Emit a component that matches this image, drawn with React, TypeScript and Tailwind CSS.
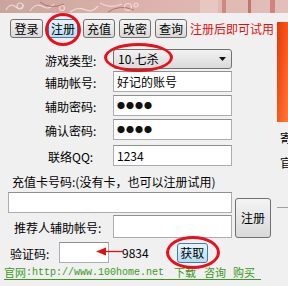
const btn =
  "h-[19px] rounded-[3px] border border-[#707070] bg-linear-to-b from-[#f4f4f4] to-[#d9d9d9] text-[12px] leading-none text-black flex items-center justify-center";
const btnHot =
  "h-[19px] rounded-[3px] border border-[#3c7fb1] bg-linear-to-b from-[#e6f5fd] to-[#b4def7] text-[12px] leading-none text-black flex items-center justify-center";
const box =
  "h-[21px] border border-[#abadb3] border-t-[#8e8f8f] bg-white px-[3px] text-[12px] leading-none text-black flex items-center outline-none";

const Field = ({
  label,
  value,
  labelClass,
  rowClass,
  dots,
}: {
  label: string;
  value: string;
  labelClass: string;
  rowClass: string;
  dots?: boolean;
}) => (
  <div className={"flex items-center " + rowClass}>
    <div className={"w-[113px] text-[12px] leading-[14px] pt-[2px] " + labelClass}>{label}</div>
    <div className={box + " w-[119px]"}>
      {dots ? (
        <span className="text-[8px] tracking-[1px] text-[#111]">●●●●</span>
      ) : (
        <span>{value}</span>
      )}
    </div>
  </div>
);

export default function App() {
  return (
    <div className="relative w-[288px] h-[286px] overflow-hidden bg-[#f0f0f0] font-['Noto_Sans_CJK_SC','Noto_Sans',sans-serif] text-black">
      {/* top banner strip */}
      <div className="h-[13px] w-full bg-linear-to-r from-[#c9a59d] via-[#dcb3ab] to-[#e2bfb9] relative overflow-hidden">
        <svg width="288" height="13" className="absolute left-0 top-0">
          <g fill="none" stroke="#f3e6df" strokeWidth="1.2" opacity="0.8">
            <path d="M6 10 q4 -8 10 -3 q4 4 8 -2" />
            <path d="M30 11 q6 -9 14 -4 q5 3 10 -3" />
            <circle cx="20" cy="6" r="3" />
            <circle cx="62" cy="8" r="2.5" />
            <path d="M70 12 q8 -6 16 -2 q6 3 12 -4" />
            <circle cx="128" cy="7" r="3.5" />
            <circle cx="136" cy="5" r="2" />
            <path d="M100 3 q10 6 22 1" />
          </g>
          <g stroke="#a14a42" strokeWidth="1" opacity="0.6" fill="none">
            <path d="M40 2 q10 8 24 2" />
            <path d="M108 12 q12 -8 26 -2" />
          </g>
          <rect x="222" y="0" width="4" height="13" fill="#c8746b" opacity="0.7" />
          <rect x="248" y="0" width="3" height="13" fill="#b85750" opacity="0.7" />
          <rect x="270" y="0" width="5" height="13" fill="#cc6a60" opacity="0.7" />
          <rect x="200" y="0" width="18" height="13" fill="#edd7d2" opacity="0.5" />
        </svg>
      </div>

      <div className="flex">
        {/* main column */}
        <div className="w-[277px]">
          <div className="mt-[6px] flex items-center pl-[10px]">
            <button className={btn + " w-[33px]"}>登录</button>
            <button className={btnHot + " w-[30px] ml-[5px]"}>注册</button>
            <button className={btn + " w-[32px] ml-[5px]"}>充值</button>
            <button className={btn + " w-[32px] ml-[4px]"}>改密</button>
            <button className={btn + " w-[32px] ml-[4px]"}>查询</button>
            <span className="ml-[3px] text-[12px] leading-[14px] text-[#dd1010] whitespace-nowrap">
              注册后即可试用
            </span>
          </div>

          <div className="mt-[11px] flex items-center">
            <div className="w-[113px] pl-[45px] text-[12px] leading-[14px] pt-[4px]">游戏类型:</div>
            <div className="w-[119px] h-[20px] rounded-[3px] border border-[#707070] bg-linear-to-b from-[#f2f2f2] to-[#dadada] flex items-center pl-[4px] pr-[5px] text-[12px] leading-none">
              <span className="flex-1">10.七杀</span>
              <svg width="7" height="4" viewBox="0 0 7 4">
                <path d="M0 0 H7 L3.5 4 Z" fill="#111" />
              </svg>
            </div>
          </div>
          <Field label="辅助帐号:" value="好记的账号" labelClass="pl-[45px]" rowClass="mt-[2px]" />
          <Field label="辅助密码:" value="" labelClass="pl-[45px]" rowClass="mt-[3px]" dots />
          <Field label="确认密码:" value="" labelClass="pl-[45px]" rowClass="mt-[3px]" dots />
          <Field label="联络QQ:" value="1234" labelClass="pl-[48px]" rowClass="mt-[5px]" />

          <div className="mt-[9px] pl-[12px] text-[12px] leading-[14px] whitespace-nowrap">
            充值卡号码:(没有卡，也可以注册试用)
          </div>

          <div className="mt-[3px] flex">
            <div className="pl-[8px]">
              <div className={box + " w-[224px]"}></div>
              <div className="mt-[2px] flex items-center h-[23px]">
                <div className="w-[105px] pl-[6px] text-[12px] leading-[14px] pt-[2px] whitespace-nowrap">
                  推荐人辅助帐号:
                </div>
                <div className={box + " w-[119px] h-[23px]"}></div>
              </div>
            </div>
            <button className={btn + " ml-[3px] mt-[6px] w-[36px] h-[40px]"}>注册</button>
          </div>

          <div className="mt-[4px] flex items-center h-[21px]">
            <div className="w-[59px] pl-[10px] text-[12px] leading-[14px] pt-[2px]">验证码:</div>
            <div className={box + " w-[50px]"}></div>
            <span className="ml-[13px] text-[12px] leading-none">9834</span>
            <button className={btnHot + " ml-[28px] w-[31px] h-[20px]"}>获取</button>
          </div>

          <div className="mt-[3px] ml-[4px] w-[257px] h-[14px] flex items-center text-[#3a9a1c] border-b border-[#3a9a1c] whitespace-nowrap">
            <span className="text-[11px] leading-[13px]">官网</span>
            <span className="font-['Liberation_Mono',monospace] text-[10px] leading-[13px]">
              :http://www.100home.net
            </span>
            <span className="ml-[10px] text-[11px] leading-[13px]">下载</span>
            <span className="ml-[8px] text-[11px] leading-[13px]">咨询</span>
            <span className="ml-[7px] text-[11px] leading-[13px]">购买</span>
          </div>
        </div>

        {/* right side panel, cut off */}
        <div className="w-[11px] overflow-hidden">
          <div className="mt-[9px] h-[100px] bg-linear-to-br from-[#e2380a] via-[#f5561a] to-[#ff7a3a]"></div>
          <div className="mt-[10px] pl-[3px] text-[12px] leading-[12px]">寄</div>
          <div className="mt-[13px] pl-[3px] text-[12px] leading-[12px]">官</div>
          <div className="mt-[38px] h-px bg-[#a0a0a0]"></div>
        </div>
      </div>

      {/* red annotations */}
      <div className="absolute left-[45px] top-[13px] w-[36px] h-[33px] rounded-[50%] border-[3px] border-[#e8101a]"></div>
      <div className="absolute left-[104px] top-[43px] w-[69px] h-[29px] rounded-[50%] border-[3px] border-[#e8101a]"></div>
      <div className="absolute left-[166px] top-[236px] w-[54px] h-[33px] rounded-[50%] border-[3px] border-[#e8101a]"></div>
      <svg className="absolute left-[96px] top-[247px]" width="27" height="9" viewBox="0 0 27 9">
        <path d="M8 4.5 H27" stroke="#e01010" strokeWidth="1.3" />
        <path d="M0 4.5 L10 0.5 L10 8.5 Z" fill="#e01010" />
      </svg>
    </div>
  );
}
